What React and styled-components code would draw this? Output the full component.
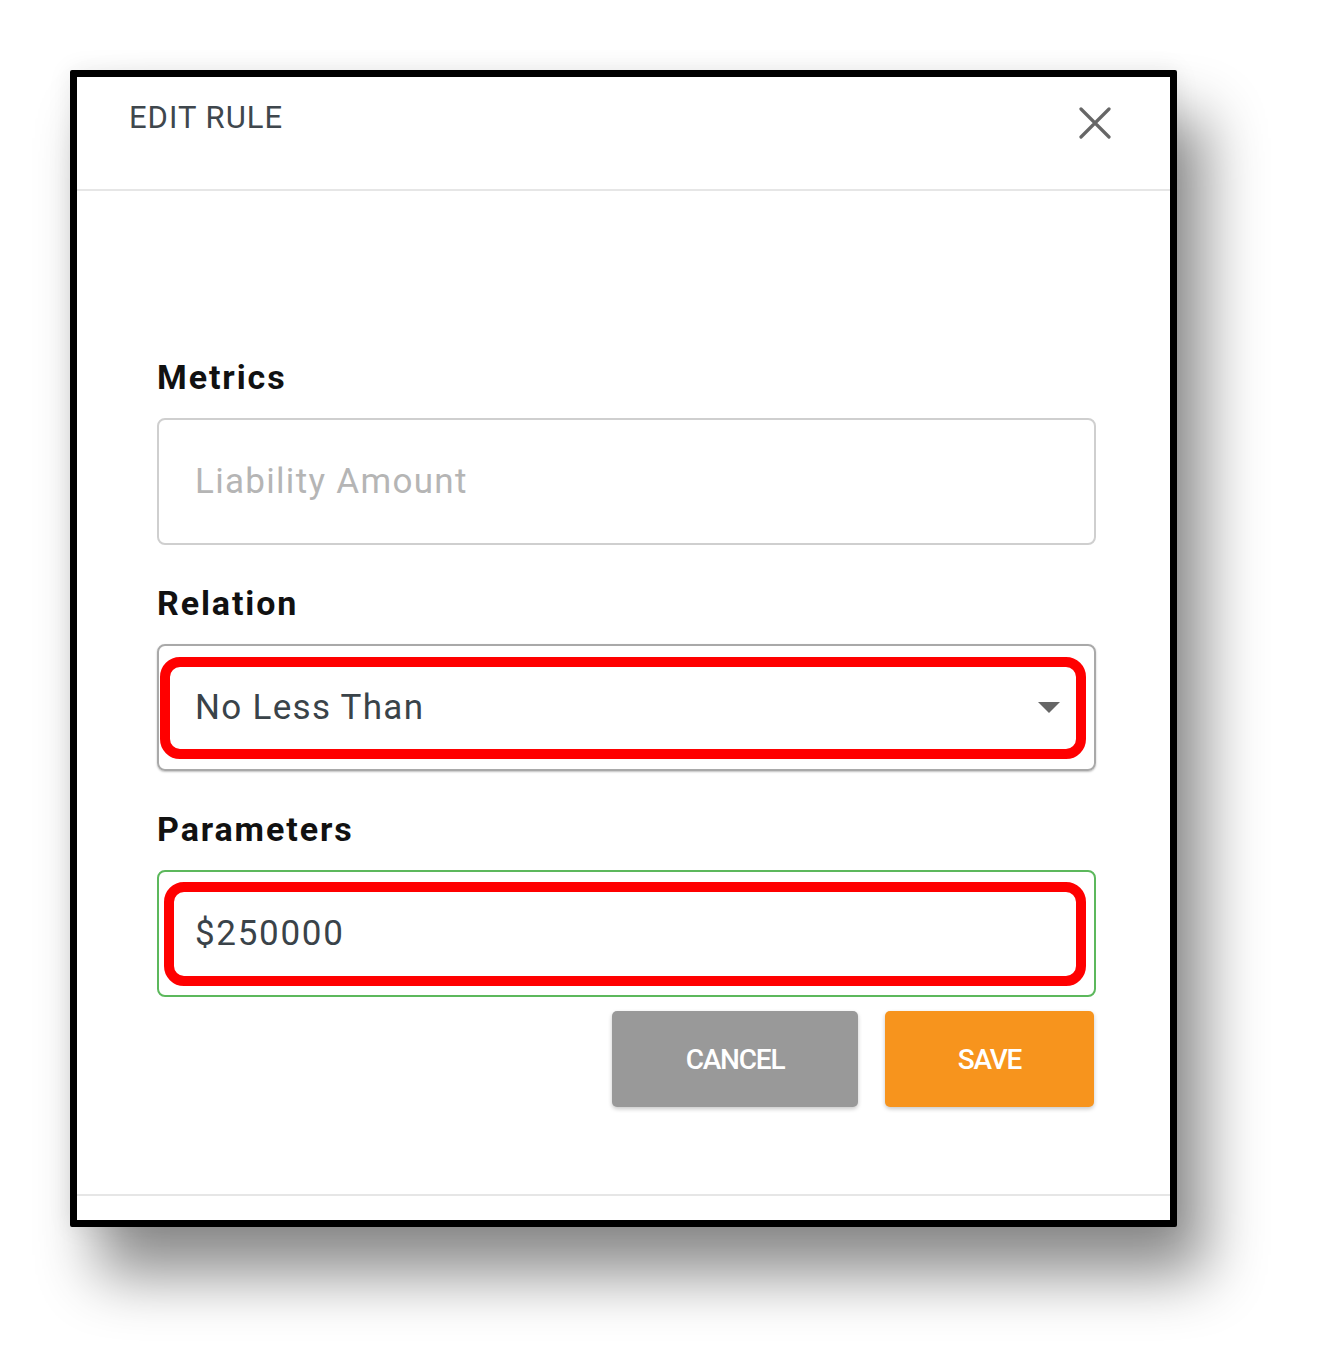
import React from 'react';
import styled, { createGlobalStyle } from 'styled-components';

const GlobalStyle = createGlobalStyle`
  html, body {
    margin: 0;
    padding: 0;
    background: #ffffff;
    font-family: Roboto, "Liberation Sans", Arial, sans-serif;
  }
`;

const Page = styled.div`
  width: 1319px;
  height: 1369px;
  padding: 70px 0 0 70px;
  box-sizing: border-box;
  overflow: hidden;
`;

const Dialog = styled.div`
  width: 1107px;
  height: 1157px;
  box-sizing: border-box;
  border: 7px solid #000;
  border-radius: 2px;
  background: #fff;
  display: flex;
  flex-direction: column;
  box-shadow: 28px 48px 60px rgba(0, 0, 0, 0.45), 0 0 24px rgba(0, 0, 0, 0.08);
`;

const Header = styled.div`
  height: 114px;
  box-sizing: border-box;
  padding: 23px 59px 0 52px;
  display: flex;
  justify-content: space-between;
  align-items: flex-start;
  border-bottom: 2px solid #e6e6e6;
`;

const Title = styled.h2`
  margin: 0;
  font-size: 31px;
  line-height: 36px;
  font-weight: 400;
  color: #3f474d;
  letter-spacing: 1px;
`;

const CloseButton = styled.button`
  width: 32px;
  height: 32px;
  margin-top: 7px;
  padding: 0;
  border: none;
  background: none;
  display: flex;
  cursor: pointer;
`;

const Body = styled.div`
  flex: 1;
  padding: 166px 74px 0 80px;
  display: flex;
  flex-direction: column;
`;

const Field = styled.div`
  display: flex;
  flex-direction: column;
  margin-bottom: ${(p) => (p.$last ? '14px' : '38px')};
`;

const Label = styled.label`
  font-size: 34px;
  line-height: 40px;
  font-weight: 700;
  color: #111;
  letter-spacing: 1.9px;
  margin-bottom: 21px;
`;

const InputBox = styled.div`
  position: relative;
  height: 127px;
  box-sizing: border-box;
  border: 2px solid ${(p) => p.$border};
  border-radius: 8px;
  padding: 0 34px 0 36px;
  display: flex;
  align-items: center;
  justify-content: space-between;
  box-shadow: ${(p) => (p.$raised ? '0 1px 2px rgba(0,0,0,0.25)' : 'none')};
`;

const InputText = styled.span`
  font-size: 35px;
  color: ${(p) => (p.$placeholder ? '#b5b5b5' : '#3a4349')};
  letter-spacing: ${(p) => (p.$wide ? '1.7px' : '1.3px')};
`;

const Caret = styled.span`
  width: 0;
  height: 0;
  border-left: 11px solid transparent;
  border-right: 11px solid transparent;
  border-top: 11px solid #666;
`;

const Highlight = styled.div`
  position: absolute;
  top: ${(p) => p.$top}px;
  left: ${(p) => p.$left}px;
  right: 8px;
  bottom: ${(p) => p.$bottom}px;
  border: 10px solid #ff0000;
  border-radius: 20px;
  pointer-events: none;
`;

const Actions = styled.div`
  display: flex;
  justify-content: flex-end;
  gap: 27px;
  padding-right: 2px;
`;

const ActionButton = styled.button`
  width: ${(p) => p.$width}px;
  height: 96px;
  border: none;
  border-radius: 5px;
  background: ${(p) => p.$bg};
  color: #fff;
  font-family: Roboto, "Liberation Sans", Arial, sans-serif;
  font-size: 28px;
  font-weight: 500;
  letter-spacing: -1.2px;
  box-shadow: 0 2px 4px rgba(0, 0, 0, 0.22);
  cursor: pointer;
`;

const Footer = styled.div`
  height: 24px;
  border-top: 2px solid #e6e6e6;
`;

const CloseIcon = () => (
  <svg width="32" height="32" viewBox="0 0 32 32">
    <path d="M2 2 L30 30 M30 2 L2 30" stroke="#666" strokeWidth="3.2" strokeLinecap="round" />
  </svg>
);

export default function App() {
  return (
    <Page>
      <GlobalStyle />
      <Dialog>
        <Header>
          <Title>EDIT RULE</Title>
          <CloseButton aria-label="close">
            <CloseIcon />
          </CloseButton>
        </Header>
        <Body>
          <Field>
            <Label>Metrics</Label>
            <InputBox $border="#cfcfcf">
              <InputText $placeholder>Liability Amount</InputText>
            </InputBox>
          </Field>
          <Field>
            <Label>Relation</Label>
            <InputBox $border="#a9a9a9" $raised>
              <InputText>No Less Than</InputText>
              <Caret />
              <Highlight $top={11} $left={1} $bottom={10} />
            </InputBox>
          </Field>
          <Field $last>
            <Label>Parameters</Label>
            <InputBox $border="#5cb85c">
              <InputText $wide>$250000</InputText>
              <Highlight $top={10} $left={5} $bottom={9} />
            </InputBox>
          </Field>
          <Actions>
            <ActionButton $width={246} $bg="#999999">CANCEL</ActionButton>
            <ActionButton $width={209} $bg="#f7941d">SAVE</ActionButton>
          </Actions>
        </Body>
        <Footer />
      </Dialog>
    </Page>
  );
}
